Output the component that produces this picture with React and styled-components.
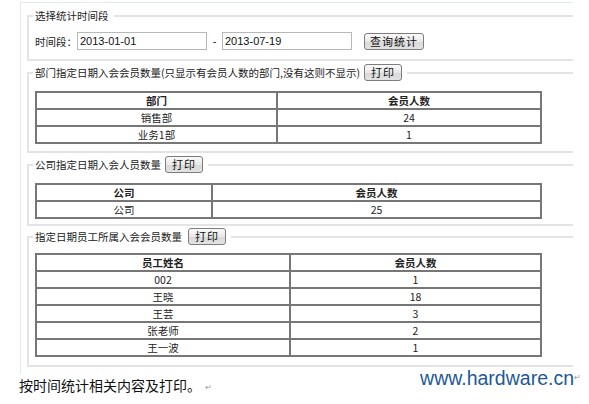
import React from "react";
import styled, { createGlobalStyle } from "styled-components";

const Global = createGlobalStyle`
  html, body { margin: 0; padding: 0; background: #fff; }
  body { font-family: "Noto Sans CJK SC", "Liberation Sans", sans-serif; color: #222; }
`;

const Page = styled.div`
  width: 589px;
  height: 404px;
  padding: 2px 0 0 20px;
  box-sizing: border-box;
`;

const Panel = styled.div`
  width: 553px;
  height: 372px;
  box-sizing: border-box;
  border-top: 1px solid #e2eaf3;
  border-left: 1px solid #e2eaf3;
  padding: 4px 0 0 6px;
`;

const Group = styled.fieldset`
  margin: 0 0 ${(p) => p.$gap ?? 3}px 0;
  border: 2px solid #e4e4e4;
  border-right: none;
  padding: ${(p) => p.$pt ?? 10}px 0 ${(p) => p.$pb ?? 7}px 6px;
  min-width: 0;
`;

const Legend = styled.legend`
  padding: 0 5px 0 2px;
  margin-left: -2px;
  font-size: 10.5px;
  line-height: 17px;
  height: 17px;
  color: #222;
  white-space: nowrap;
`;

const LegendInner = styled.span`
  display: inline-flex;
  align-items: center;
  gap: 4px;
  height: 17px;
`;

const Btn = styled.button`
  height: 17px;
  padding: 0 ${(p) => p.$px ?? 6}px;
  margin-left: ${(p) => p.$ml ?? 0}px;
  font-family: "Noto Sans CJK SC", sans-serif;
  font-size: 11px;
  line-height: 15px;
  color: #111;
  letter-spacing: 1px;
  border: 1px solid #7d7d7d;
  border-radius: 3px;
  background: linear-gradient(#fafafa, #e9e9e9 50%, #d9d9d9 51%, #e2e2e2);
  box-sizing: border-box;
  cursor: pointer;
  flex-shrink: 0;
`;

const Row = styled.div`
  display: flex;
  align-items: center;
  height: 18px;
  font-size: 10.5px;
`;

const Label = styled.span`
  width: 42px;
  flex-shrink: 0;
  white-space: nowrap;
`;

const DateInput = styled.input`
  width: 130px;
  height: 18px;
  flex-shrink: 0;
  box-sizing: border-box;
  border: 1px solid #b5b9be;
  padding: 0 2px;
  font-family: "Liberation Sans", Arial, sans-serif;
  font-size: 11px;
  color: #111;
  outline: none;
`;

const Dash = styled.span`
  width: 15px;
  text-align: center;
  font-family: "Liberation Sans", Arial, sans-serif;
  font-size: 11px;
`;

const Table = styled.table`
  width: 507px;
  border-collapse: collapse;
  border: 2px solid #555;
  font-size: 10.5px;
  table-layout: fixed;
`;

const Cell = styled.td`
  border: 2px solid #777;
  height: 15px;
  padding: 0;
  line-height: 15px;
  text-align: center;
  font-weight: ${(p) => (p.$head ? 700 : 400)};
  color: #222;
`;

const Bottom = styled.div`
  display: flex;
  justify-content: space-between;
  align-items: flex-start;
  width: 561px;
  margin-top: -6px;
`;

const Caption = styled.div`
  font-size: 14px;
  line-height: 16px;
  margin-top: 9px;
  color: #111;
  margin-left: -1px;
`;

const Mark = styled.span`
  font-size: 8px;
  color: #999;
  margin-left: ${(p) => (p.$up ? 0 : 4)}px;
  vertical-align: ${(p) => (p.$up ? "top" : "middle")};
`;

const Water = styled.div`
  font-family: "Liberation Sans", Arial, sans-serif;
  font-size: 19.5px;
  color: #1f5897;
  line-height: 20px;
  white-space: nowrap;
`;

function DataTable({ cols, head, rows }) {
  return (
    <Table>
      <colgroup>
        <col style={{ width: cols[0] }} />
        <col />
      </colgroup>
      <tbody>
        <tr>
          {head.map((h) => (
            <Cell as="th" $head key={h}>
              {h}
            </Cell>
          ))}
        </tr>
        {rows.map((r, i) => (
          <tr key={i}>
            <Cell>{r[0]}</Cell>
            <Cell>{r[1]}</Cell>
          </tr>
        ))}
      </tbody>
    </Table>
  );
}

export default function App() {
  return (
    <Page>
      <Global />
      <Panel>
        <Group $pt={8} $pb={9} $gap={3}>
          <Legend>选择统计时间段</Legend>
          <Row>
            <Label>时间段：</Label>
            <DateInput defaultValue="2013-01-01" />
            <Dash>-</Dash>
            <DateInput defaultValue="2013-07-19" />
            <Btn $px={5} $ml={12}>查询统计</Btn>
          </Row>
        </Group>
        <Group $pt={10} $pb={7} $gap={3}>
          <Legend>
            <LegendInner>
              部门指定日期入会会员数量(只显示有会员人数的部门,没有这则不显示)
              <Btn>打印</Btn>
            </LegendInner>
          </Legend>
          <DataTable
            cols={["241px"]}
            head={["部门", "会员人数"]}
            rows={[
              ["销售部", "24"],
              ["业务1部", "1"],
            ]}
          />
        </Group>
        <Group $pt={10} $pb={5} $gap={2}>
          <Legend>
            <LegendInner>
              公司指定日期入会人员数量
              <Btn>打印</Btn>
            </LegendInner>
          </Legend>
          <DataTable
            cols={["176px"]}
            head={["公司", "会员人数"]}
            rows={[["公司", "25"]]}
          />
        </Group>
        <Group $pt={8} $pb={8} $gap={0}>
          <Legend>
            <LegendInner>
              指定日期员工所属入会会员数量
              <Btn $ml={2}>打印</Btn>
            </LegendInner>
          </Legend>
          <DataTable
            cols={["254px"]}
            head={["员工姓名", "会员人数"]}
            rows={[
              ["002", "1"],
              ["王晓", "18"],
              ["王芸", "3"],
              ["张老师", "2"],
              ["王一波", "1"],
            ]}
          />
        </Group>
      </Panel>
      <Bottom>
        <Caption>
          按时间统计相关内容及打印。<Mark>↵</Mark>
        </Caption>
        <Water>
          www.hardware.cn<Mark $up>↵</Mark>
        </Water>
      </Bottom>
    </Page>
  );
}
